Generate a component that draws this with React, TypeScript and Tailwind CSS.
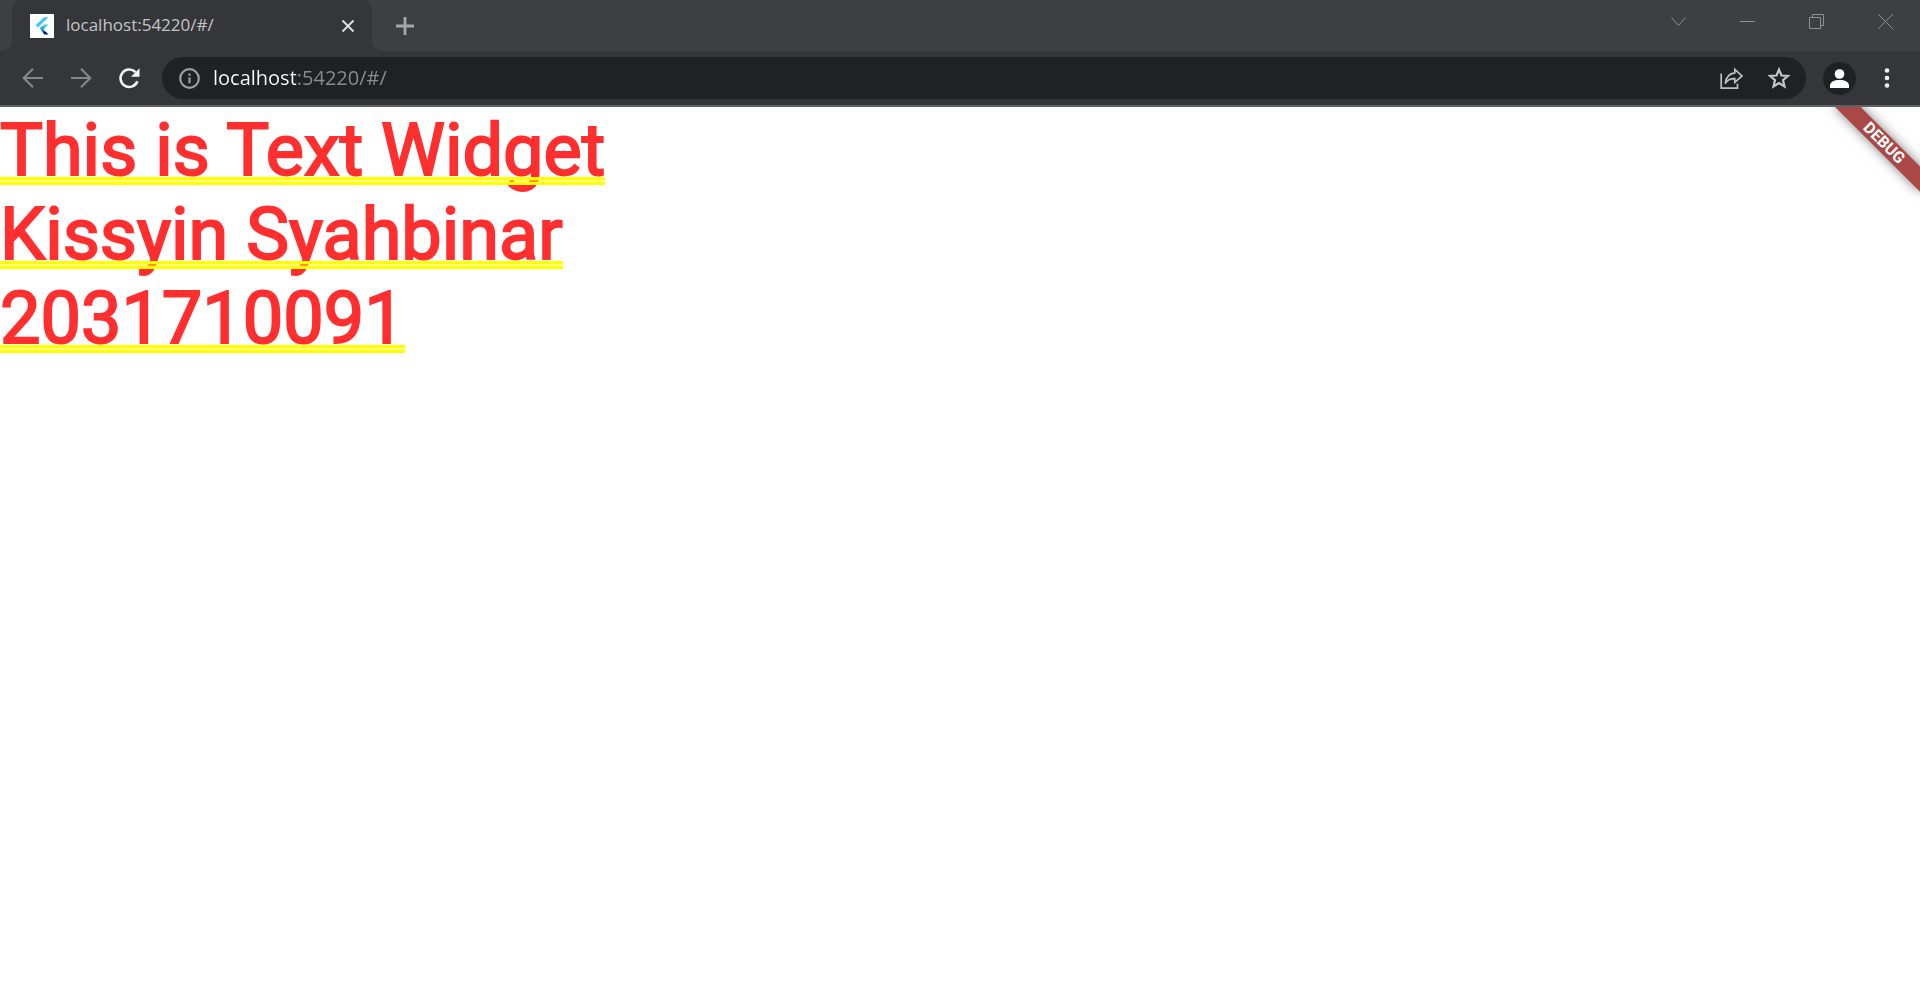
import React from "react";

const ribbonText = "DEBUG";

function FlutterMark() {
  return (
    <svg viewBox="0 0 24 24" className="size-6 shrink-0 bg-white" aria-hidden="true">
      <path d="M14 3.200h4.400L8 13.600 5.600 11.300z" fill="#47c5fb" />
      <path d="M14 10.500h4.400L12.200 16.600 9.900 14.300z" fill="#47c5fb" />
      <path d="M9.900 14.300 12.200 12.200 14.500 14.300 12.200 16.800z" fill="#22a7f0" />
      <path d="M11.300 15.700 13.200 15.300 16 18.200 12.600 18z" fill="#0b7fd0" />
      <path d="M12.300 17.600 16 17.800 18.400 20.600h-4z" fill="#00128a" />
    </svg>
  );
}

function TabStrip() {
  return (
    <header className="flex h-[51px] items-stretch bg-[#3c4043]">
      <div className="flex w-3 bg-[#35363a]">
        <span className="w-full rounded-br-[10px] bg-[#3c4043]" />
      </div>
      <div className="flex bg-[#3c4043]">
        <div className="flex w-[360px] items-center rounded-t-[10px] bg-[#35363a] pl-[18px] pr-3">
          <FlutterMark />
          <span className="ml-3 flex-1 pb-0.5 text-[17px] leading-6 text-[#c4c5c7]">localhost:54220/#/</span>
          <button type="button" aria-label="Close tab" className="flex size-6 items-center justify-center text-[#dadce0]">
            <svg viewBox="0 0 24 24" className="size-6" fill="none" stroke="currentColor" strokeWidth="2">
              <path d="M6.500 6.500 17.500 17.500M17.500 6.500 6.500 17.500" />
            </svg>
          </button>
        </div>
      </div>
      <div className="flex bg-[#35363a]">
        <div className="flex items-center rounded-bl-[10px] bg-[#3c4043] pl-[21px]">
          <button type="button" aria-label="New tab" className="text-[#a5a8ab]">
            <svg viewBox="0 0 24 24" className="size-6" fill="none" stroke="currentColor" strokeWidth="2.800">
              <path d="M12 3v18M3 12h18" />
            </svg>
          </button>
        </div>
      </div>
      <div className="ml-auto flex h-[43px] text-[#8e9193]">
        <button type="button" aria-label="Search tabs" className="flex w-[69px] items-center justify-center">
          <svg viewBox="0 0 17 17" className="size-[17px]" fill="none" stroke="currentColor">
            <path d="M1.500 4.500 8.500 12.500 15.500 4.500" />
          </svg>
        </button>
        <button type="button" aria-label="Minimize" className="flex w-[69px] items-center justify-center">
          <svg viewBox="0 0 17 17" className="size-[17px]" fill="none" stroke="currentColor">
            <path d="M1 8.500h15" />
          </svg>
        </button>
        <button type="button" aria-label="Restore" className="flex w-[69px] items-center justify-center">
          <svg viewBox="0 0 17 17" className="size-[17px]" fill="none" stroke="currentColor">
            <path d="M1.500 4.500h11v11h-11zM4.500 4.500v-3h11v11h-3" />
          </svg>
        </button>
        <button type="button" aria-label="Close window" className="flex w-[69px] items-center justify-center">
          <svg viewBox="0 0 17 17" className="size-[17px]" fill="none" stroke="currentColor">
            <path d="M1 1 16 16M16 1 1 16" />
          </svg>
        </button>
      </div>
    </header>
  );
}

function Toolbar() {
  return (
    <nav className="flex h-14 items-center border-b-2 border-[#5f6064] bg-[#35363a] pr-[21px] pl-[21px]">
      <div className="flex gap-6">
        <button type="button" aria-label="Back" className="text-[#85868a]">
          <svg viewBox="0 0 24 24" className="size-6" fill="none" stroke="currentColor" strokeWidth="2.200">
            <path d="M22 12H3.500M12 2.800 2.800 12 12 21.200" />
          </svg>
        </button>
        <button type="button" aria-label="Forward" className="text-[#85868a]">
          <svg viewBox="0 0 24 24" className="size-6" fill="none" stroke="currentColor" strokeWidth="2.200">
            <path d="M2 12h18.500M12 2.800 21.200 12 12 21.200" />
          </svg>
        </button>
        <button type="button" aria-label="Reload" className="text-[#f1f3f4]">
          <svg viewBox="0 0 24 24" className="size-6">
            <path
              d="M20.400 15.200A8.700 8.700 0 1 1 18.500 6.200"
              fill="none"
              stroke="currentColor"
              strokeWidth="2.600"
            />
            <path d="M22.500 2.200V10.800H14z" fill="currentColor" />
          </svg>
        </button>
      </div>
      <div className="ml-[21px] flex h-[42px] flex-1 items-center rounded-full bg-[#202124] pr-[15px] pl-[15px]">
        <button type="button" aria-label="View site information" className="text-[#9aa0a6]">
          <svg viewBox="0 0 24 24" className="size-6" fill="none" stroke="currentColor" strokeWidth="2.200">
            <circle cx="12.500" cy="12.500" r="9.300" />
            <path d="M12.500 11.500v5.700M12.500 7.500v2.300" />
          </svg>
        </button>
        <input
          type="text"
          aria-label="Address"
          defaultValue="localhost:54220/#/"
          className="ml-3 h-8 min-w-0 flex-1 bg-[linear-gradient(90deg,#ffffff_83px,#8b8d91_83px)] bg-clip-text text-[20px] leading-8 text-transparent outline-none"
        />
        <button type="button" aria-label="Share this page" className="text-[#bdbec0]">
          <svg viewBox="0 0 24 24" className="size-6" fill="none" stroke="currentColor" strokeWidth="1.700">
            <path d="M2.200 7.500V22.200H18.500V17.800" />
            <path d="M15.800 3.300 23 10 15.800 16.300V12.700C11.500 12.500 8.800 13.500 6.200 17.500 7 11.500 9.500 7.500 15.800 6.800z" />
          </svg>
        </button>
        <button type="button" aria-label="Bookmark this tab" className="ml-6 text-[#c5c6c8]">
          <svg viewBox="0 0 24 24" className="size-6" fill="none" stroke="currentColor" strokeWidth="2.200">
            <path d="M12 3.600 14.500 9.500 20.900 10 16 14.200 17.500 20.500 12 17.100 6.500 20.500 8 14.200 3.100 10 9.500 9.500z" />
          </svg>
        </button>
      </div>
      <button type="button" aria-label="Profile" className="ml-[17px] size-[33px] rounded-full bg-[#202124] text-white">
        <svg viewBox="0 0 33 33" className="size-[33px]" fill="currentColor">
          <circle cx="16.500" cy="12" r="4.800" />
          <path d="M7 26v-2.500c0-3.500 4-5.500 9.500-5.500s9.500 2 9.500 5.500V26z" />
        </svg>
      </button>
      <button type="button" aria-label="Menu" className="ml-[19px] text-[#f1f3f4]">
        <svg viewBox="0 0 24 24" className="size-6" fill="currentColor">
          <circle cx="12" cy="4.500" r="2.300" />
          <circle cx="12" cy="12" r="2.300" />
          <circle cx="12" cy="19.500" r="2.300" />
        </svg>
      </button>
    </nav>
  );
}

function Line({ children }: { children: React.ReactNode }) {
  return (
    <p className="relative h-[84px] leading-[88px] whitespace-nowrap">
      {children}
      <span className="absolute inset-x-0 top-[70px] h-2 border-y-[3px] border-[#ffff00] bg-[#ffff00]/50" />
    </p>
  );
}

export default function App() {
  return (
    <div className="flex min-h-screen flex-col bg-white font-['Open_Sans','Noto_Sans',sans-serif]">
      <TabStrip />
      <Toolbar />
      <main className="relative flex flex-1 flex-col items-start overflow-hidden font-[Roboto,sans-serif] text-[72px] font-normal text-[#ff2f2f] [-webkit-text-stroke:2px_#ff2f2f]">
        <Line>This is Text Widget</Line>
        <Line>Kissyin Syahbinar</Line>
        <Line>2031710091</Line>
        <div className="absolute top-[42px] right-[-60px] h-[18px] w-[120px] origin-[60px_-42px] rotate-45 bg-[#aa4848] text-center text-[16px] leading-[18px] font-bold text-white shadow-[0_0_12px_rgba(0,0,0,0.5)] [-webkit-text-stroke:0px]">
          {ribbonText}
        </div>
      </main>
    </div>
  );
}
